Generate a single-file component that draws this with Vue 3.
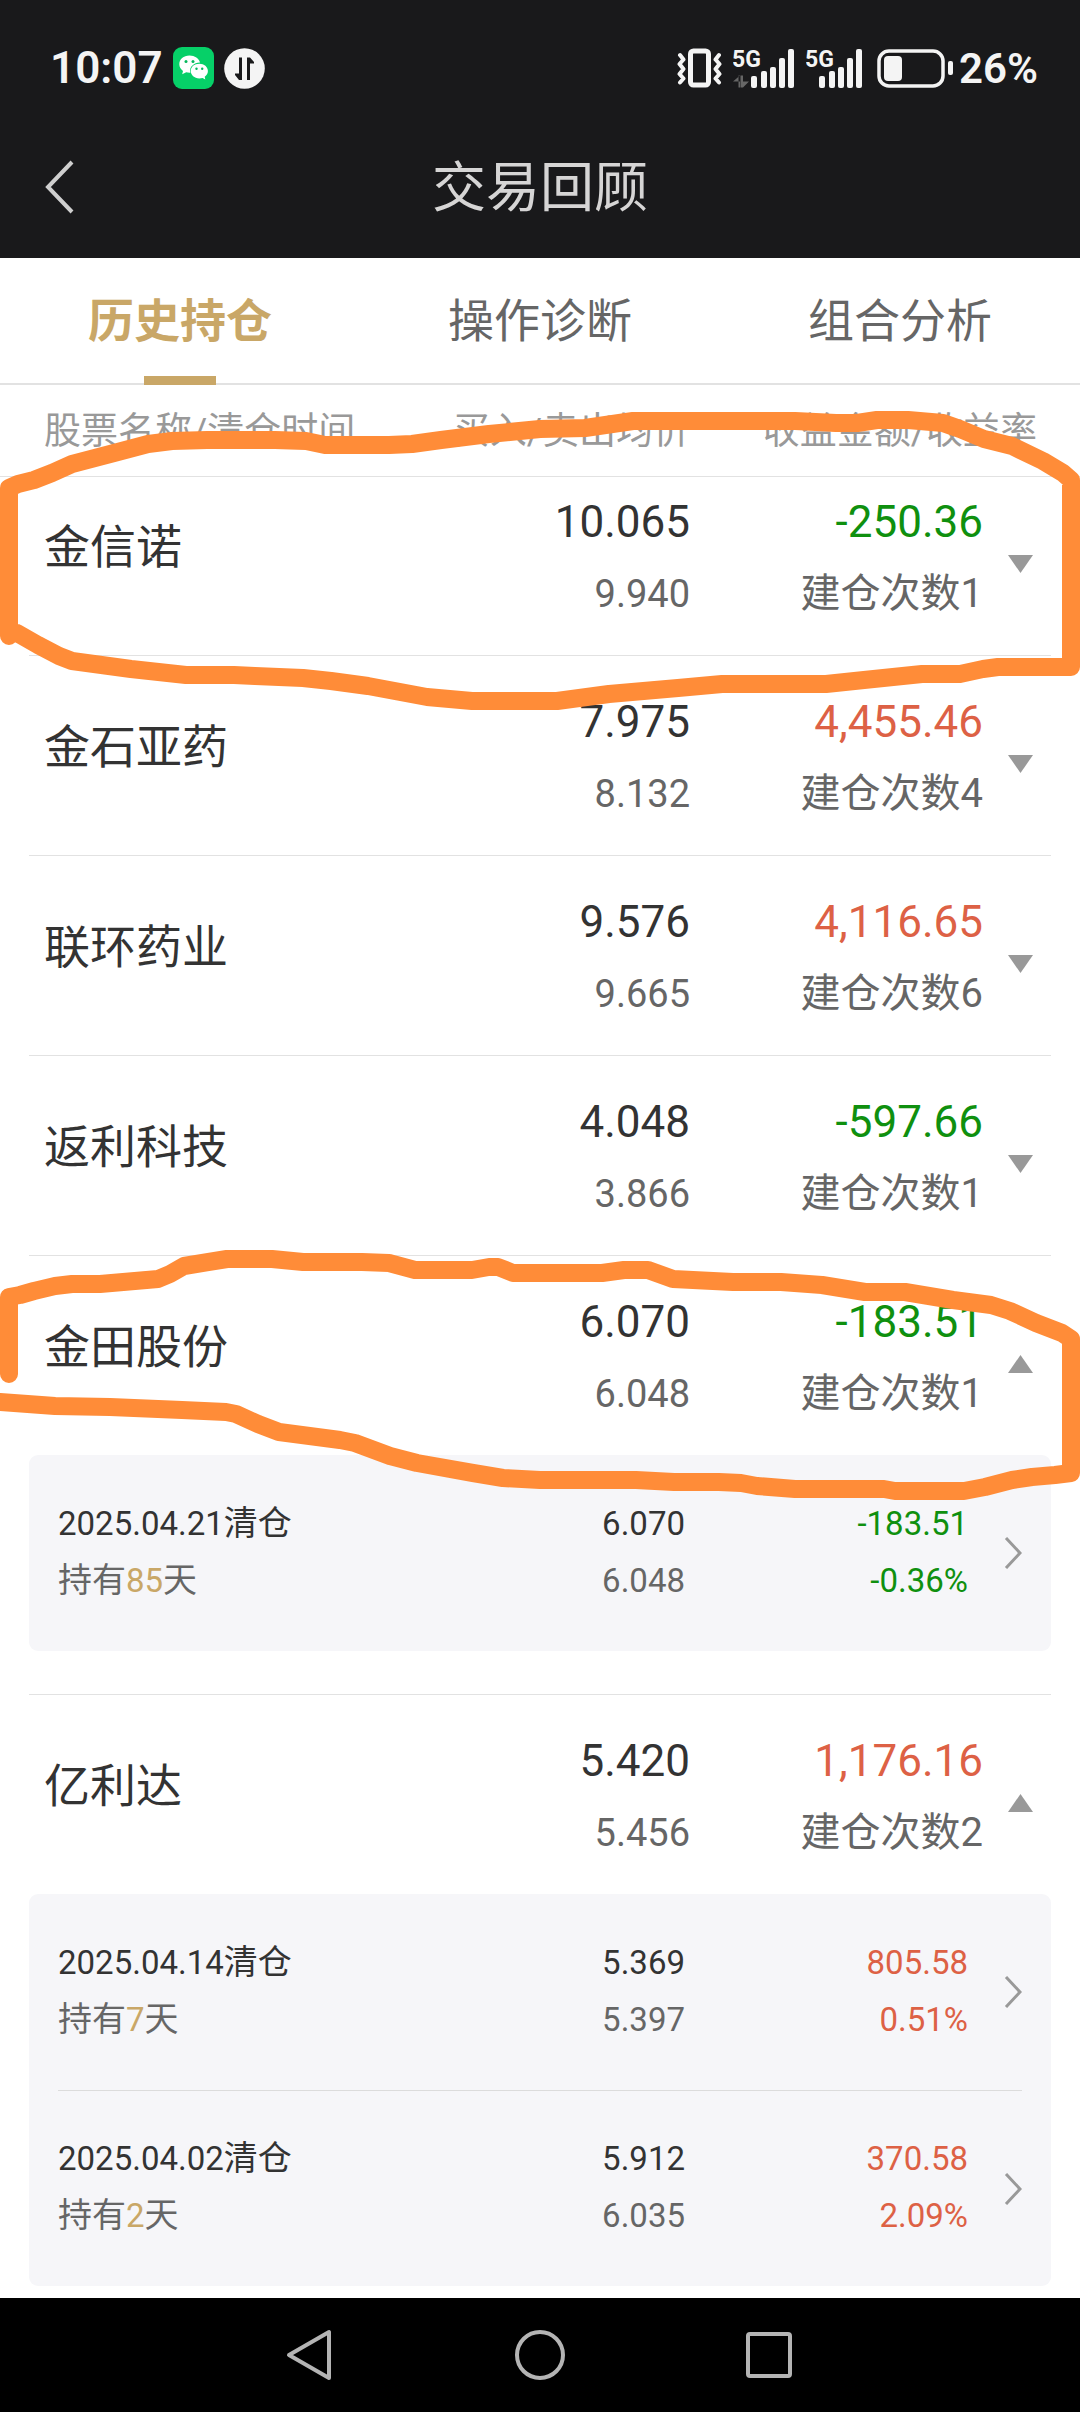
<script setup>
import { ref } from 'vue'

const tabs = ['历史持仓', '操作诊断', '组合分析']
const activeTab = ref(0)

const stocks = ref([
  { name: '金信诺', buy: '10.065', sell: '9.940', profit: '-250.36', count: 1, open: false, trades: [] },
  { name: '金石亚药', buy: '7.975', sell: '8.132', profit: '4,455.46', count: 4, open: false, trades: [] },
  { name: '联环药业', buy: '9.576', sell: '9.665', profit: '4,116.65', count: 6, open: false, trades: [] },
  { name: '返利科技', buy: '4.048', sell: '3.866', profit: '-597.66', count: 1, open: false, trades: [] },
  {
    name: '金田股份', buy: '6.070', sell: '6.048', profit: '-183.51', count: 1, open: true,
    trades: [{ date: '2025.04.21', days: 85, buy: '6.070', sell: '6.048', profit: '-183.51', rate: '-0.36%' }],
  },
  {
    name: '亿利达', buy: '5.420', sell: '5.456', profit: '1,176.16', count: 2, open: true,
    trades: [
      { date: '2025.04.14', days: 7, buy: '5.369', sell: '5.397', profit: '805.58', rate: '0.51%' },
      { date: '2025.04.02', days: 2, buy: '5.912', sell: '6.035', profit: '370.58', rate: '2.09%' },
    ],
  },
])

const tone = (value) => (value.startsWith('-') ? 'loss' : 'gain')
</script>

<template>
  <div class="app">
    <div class="status">
      <div class="status-group">
        <span class="clock">10:07</span>
        <svg class="app-icon" width="41" height="42" viewBox="0 0 41 42" aria-hidden="true">
          <rect width="41" height="42" rx="9" fill="#06d068" />
          <path fill="#fff" d="M16.5 8.5C10.500 8.500 6.300 12.400 6.300 17.200c0 2.800 1.500 5.100 3.700 6.700l-.8 3.300 4-2c1.100.3 2.200.5 3.400.5l.7 0c-1.400-6 4-10.300 9.700-10.200C26 11.400 21.800 8.500 16.500 8.500z" />
          <path fill="#fff" d="M26.300 16.800c-5 0-8.600 3.200-8.600 7.300s3.700 7.300 8.600 7.300c1.200 0 2.300-.2 3.300-.5l2.700 1.600-.6-2.700c2-1.300 3.200-3.300 3.200-5.700 0-4.100-3.700-7.300-8.600-7.300z" />
          <g fill="#06b85c">
            <circle cx="13" cy="14.500" r="1.500" /><circle cx="20" cy="14.500" r="1.500" />
            <circle cx="23.500" cy="21.700" r="1.200" /><circle cx="29.200" cy="21.700" r="1.200" />
          </g>
        </svg>
        <svg class="swap-icon" width="41" height="41" viewBox="0 0 41 41" aria-hidden="true">
          <circle cx="20.500" cy="20.500" r="20.300" fill="#f4f4f4" />
          <path d="M15 9.500h3V32h-3l-4-5v-1.500h4zM26 32h-3V9.500h3l4 4.500v1.500h-4z" fill="#19191b" />
        </svg>
      </div>
      <div class="status-group">
        <svg class="vibrate" width="45" height="40" viewBox="0 0 45 40" fill="none" stroke="#f4f4f4" aria-hidden="true">
          <rect x="13.500" y="3" width="18" height="34" rx="3" stroke-width="5" />
          <path d="M3 7l3.500 4.500L2.500 16 6.500 21 2.500 26 6.500 30.500 3 34.500M42 7l-3.500 4.500L42.500 16l-4 5 4 5-4 4.500L42 34.500" stroke-width="4" stroke-linecap="round" stroke-linejoin="round" />
        </svg>
        <svg class="signal" width="62" height="49" viewBox="0 -5 62 49" fill="#f4f4f4" aria-hidden="true">
          <text x="-1" y="18" class="net">5G</text>
          <path d="M5.500 26.500v12h2v-12zM0 32.500l7-6v6zM10 26.500v12h-2v-12zM10 38.500l6-6h-6z" fill="#666" />
          <rect x="18" y="27" width="6" height="12" rx="2" />
          <rect x="28" y="22" width="6" height="17" rx="2" />
          <rect x="37" y="18" width="6" height="21" rx="2" />
          <rect x="46" y="9" width="6" height="30" rx="2" />
          <rect x="55" y="0" width="6" height="39" rx="2" />
        </svg>
        <svg class="signal" width="57" height="49" viewBox="0 -5 57 49" fill="#f4f4f4" aria-hidden="true">
          <text x="-1" y="18" class="net">5G</text>
          <rect x="13" y="27" width="6" height="12" rx="2" />
          <rect x="23" y="22" width="6" height="17" rx="2" />
          <rect x="32" y="18" width="6" height="21" rx="2" />
          <rect x="41" y="9" width="6" height="30" rx="2" />
          <rect x="50" y="0" width="6" height="39" rx="2" />
        </svg>
        <svg class="battery" width="76" height="39" viewBox="0 0 76 39" aria-hidden="true">
          <rect x="2" y="2" width="64" height="35" rx="10" fill="none" stroke="#f4f4f4" stroke-width="3.500" />
          <rect x="7" y="7" width="18" height="25" rx="4" fill="#f4f4f4" />
          <rect x="71" y="12" width="5" height="14" rx="2" fill="#f4f4f4" />
        </svg>
        <span class="percent">26%</span>
      </div>
    </div>

    <header class="titlebar">
      <button class="back" type="button" aria-label="返回">
        <svg width="30" height="54" viewBox="0 0 30 54" aria-hidden="true">
          <path d="M28 2L4 27l24 25" fill="none" stroke="#cfcfcf" stroke-width="4" />
        </svg>
      </button>
      <h1>交易回顾</h1>
    </header>

    <nav class="tabs">
      <button
        v-for="(tab, i) in tabs"
        :key="tab"
        type="button"
        class="tab"
        :class="{ active: i === activeTab }"
        @click="activeTab = i"
      >{{ tab }}</button>
    </nav>

    <table class="holdings">
      <thead>
        <tr class="head">
          <th>股票名称/清仓时间</th>
          <th class="right">买入/卖出均价</th>
          <th class="right">收益金额/收益率</th>
        </tr>
      </thead>
      <tbody>
        <template v-for="stock in stocks" :key="stock.name">
          <tr class="stock" :class="{ open: stock.open }">
            <td class="name">{{ stock.name }}</td>
            <td class="right">
              <div class="main">{{ stock.buy }}</div>
              <div class="minor">{{ stock.sell }}</div>
            </td>
            <td class="right">
              <div class="main" :class="tone(stock.profit)">{{ stock.profit }}</div>
              <div class="count">建仓次数{{ stock.count }}</div>
            </td>
            <td class="toggle-cell">
              <button class="toggle" type="button" :aria-expanded="stock.open" aria-label="展开明细" @click="stock.open = !stock.open">
                <svg width="25" height="18" viewBox="0 0 25 18" aria-hidden="true">
                  <path :d="stock.open ? 'M0 18L12.500 0 25 18z' : 'M0 0h25L12.500 18z'" fill="#999" />
                </svg>
              </button>
            </td>
          </tr>
          <tr v-if="stock.open" class="detail">
            <td class="card">
              <a v-for="trade in stock.trades" :key="trade.date" href="#" class="trade">
                <span class="cell">
                  <span class="line"><span class="num">{{ trade.date }}</span>清仓</span>
                  <span class="line grey">持有<span class="num gold">{{ trade.days }}</span>天</span>
                </span>
                <span class="cell right">
                  <span class="line num">{{ trade.buy }}</span>
                  <span class="line num grey">{{ trade.sell }}</span>
                </span>
                <span class="cell right" :class="tone(trade.profit)">
                  <span class="line num">{{ trade.profit }}</span>
                  <span class="line num">{{ trade.rate }}</span>
                </span>
                <svg class="chevron" width="18" height="32" viewBox="0 0 18 32" aria-hidden="true">
                  <path d="M2 1l14 15L2 31" fill="none" stroke="#999" stroke-width="3" />
                </svg>
              </a>
            </td>
          </tr>
        </template>
      </tbody>
    </table>

    <footer class="navbar">
      <button type="button" aria-label="后退">
        <svg width="52" height="52" viewBox="0 0 52 52" aria-hidden="true"><path d="M44 3v46L4 26z" /></svg>
      </button>
      <button type="button" aria-label="主页">
        <svg width="52" height="52" viewBox="0 0 52 52" aria-hidden="true"><circle cx="26" cy="26" r="23" /></svg>
      </button>
      <button type="button" aria-label="最近任务">
        <svg width="52" height="52" viewBox="0 0 52 52" aria-hidden="true"><rect x="5" y="5" width="42" height="42" rx="2" /></svg>
      </button>
    </footer>

    <!-- hand-drawn marker rings around two holdings -->
    <svg class="marker" viewBox="0 0 1080 2412" aria-hidden="true">
      <path d="M9 636V488L18 484 34 480 52 473 72 464 114 453 148 444 172 441 207 440H275L306 441 325 445H389L412 444 441 440 489 434 540 429 585 428 633 421H795L836 423H857L877 420H908L943 423 960 429 984 439 1012 446 1043 461 1063 473 1071 480V667H998L983 669 960 674H922L864 680 826 684H722L678 688 609 694 557 701H472L427 697 368 686 331 681 303 678 255 676 234 675H186L131 669 72 661 59 656 38 645 17 633" />
      <path d="M9 1374V1297L20 1295 34 1291 55 1286 72 1284H100L158 1279 170 1274 184 1266 227 1259H272L303 1262H362L389 1263 415 1270H472L489 1267H498L513 1273H602L624 1270H648L673 1279 733 1282H781L822 1285 865 1292H905L953 1300 991 1305 1010 1311 1036 1323 1062 1333 1071 1339V1473L1055 1475 1032 1477 1012 1480 985 1487 964 1491H895L884 1489H795L757 1486 741 1483 719 1482H674L636 1480H540L503 1478 473 1473 417 1463 390 1456 355 1443 340 1440 279 1432 258 1424 236 1414 226 1412 182 1410 110 1407 55 1406 0 1402H-12" />
    </svg>
  </div>
</template>

<style>
body {
  background: #fff;
}
</style>

<style scoped>
.app {
  position: relative;
  min-height: 100vh;
  display: flex;
  flex-direction: column;
  overflow: hidden;
  background: #fff;
  color: #333;
  font-family: Roboto, "Noto Sans CJK SC", sans-serif;
}

button {
  padding: 0;
  border: 0;
  background: none;
  color: inherit;
  font: inherit;
}

svg {
  display: block;
}

.status {
  display: flex;
  justify-content: space-between;
  align-items: center;
  height: 96px;
  padding: 20px 42px 0 50px;
  background: #19191b;
  color: #f4f4f4;
  font-weight: 600;
}

.status-group {
  display: flex;
  align-items: center;
}

.clock {
  font-size: 44px;
}

.app-icon {
  margin-left: 10px;
}

.swap-icon {
  margin-left: 10px;
}

.signal {
  margin-left: 11px;
}

.net {
  font-size: 23px;
  font-weight: 700;
}

.battery {
  margin: 0 6px 0 14px;
}

.percent {
  font-size: 42px;
}

.titlebar {
  display: grid;
  grid-template-columns: 100px 1fr 100px;
  align-items: center;
  height: 142px;
  background: #19191b;
  color: #d6d5d5;
}

.back {
  padding-left: 44px;
}

h1 {
  margin: 0;
  padding-top: 3px;
  font-size: 54px;
  font-weight: 400;
  line-height: 80px;
  text-align: center;
}

.tabs {
  display: flex;
  border-bottom: 2px solid #e2e2e2;
}

.tab {
  position: relative;
  flex: 1;
  height: 125px;
  padding-bottom: 7px;
  color: #666;
  font-size: 46px;
}

.tab.active {
  color: #c9a767;
  font-weight: 700;
}

.tab.active::after {
  content: "";
  position: absolute;
  bottom: -2px;
  left: 50%;
  width: 72px;
  height: 9px;
  margin-left: -36px;
  background: #c9a767;
}

.holdings,
.holdings thead,
.holdings tbody {
  display: block;
}

.holdings {
  flex: 1;
  padding-bottom: 12px;
}

.holdings thead {
  position: relative;
  z-index: 1;
  background: #fff;
}

.head {
  display: grid;
  grid-template-columns: 1fr 1fr 347px;
  height: 91px;
  padding: 0 43px 0 44px;
  border-bottom: 1px solid #e2e2e2;
}

th,
td {
  padding: 0;
}

th {
  color: #999;
  font-size: 37px;
  font-weight: 400;
  line-height: 94px;
  text-align: left;
  white-space: nowrap;
}

th.right,
.right {
  text-align: right;
}

/* the first row scrolls slightly under the fixed head */
.holdings tbody {
  margin-top: -21px;
}

.stock {
  display: grid;
  grid-template-columns: 1fr 1fr 293px 50px;
  height: 170px;
  margin: 0 29px;
  padding: 29px 18px 0 15px;
  border-bottom: 1px solid #e2e2e2;
}

.stock.open {
  height: 169px;
  border-bottom-color: transparent;
}

.name {
  padding-top: 26px;
  font-size: 46px;
  line-height: 72px;
}

.main {
  font-size: 44px;
  line-height: 74px;
}

.minor,
.count {
  color: #666;
  line-height: 70px;
}

.minor {
  font-size: 38px;
}

.count {
  font-size: 40px;
}

.toggle-cell {
  display: flex;
  justify-content: flex-end;
  align-items: flex-start;
  padding-top: 70px;
}

.gain {
  color: #dd6145;
}

.loss {
  color: #0f900f;
}

.grey {
  color: #666;
}

.gold {
  color: #c9a767;
}

.detail {
  display: block;
  margin: 0 29px;
}

.detail:not(:last-child) {
  padding-bottom: 43px;
  border-bottom: 1px solid #e2e2e2;
}

.card {
  display: block;
  padding: 0 29px;
  border-radius: 9px;
  background: #f6f6f9;
}

.trade {
  display: grid;
  grid-template-columns: 1fr 1fr 283px 54px;
  align-items: center;
  height: 196px;
  color: #333;
  text-decoration: none;
}

.trade + .trade {
  height: 195px;
  border-top: 1px solid #dcdcdc;
}

.cell {
  padding-bottom: 3px;
}

.cell.gain {
  color: #dd6145;
}

.cell.loss {
  color: #0f900f;
}

.line {
  display: block;
  font-size: 34px;
  line-height: 57px;
}

.num {
  font-size: 33px;
}

.chevron {
  justify-self: end;
}

.navbar {
  display: flex;
  justify-content: center;
  align-items: center;
  gap: 177px;
  height: 114px;
  background: #000;
}

.navbar svg {
  fill: none;
  stroke: #b4b4b4;
  stroke-width: 4;
  stroke-linejoin: round;
}

.marker {
  position: absolute;
  top: 0;
  left: 0;
  z-index: 2;
  width: 100%;
  height: auto;
  pointer-events: none;
  fill: none;
  stroke: #ff8c38;
  stroke-width: 18;
  stroke-linecap: round;
  stroke-linejoin: round;
}
</style>
